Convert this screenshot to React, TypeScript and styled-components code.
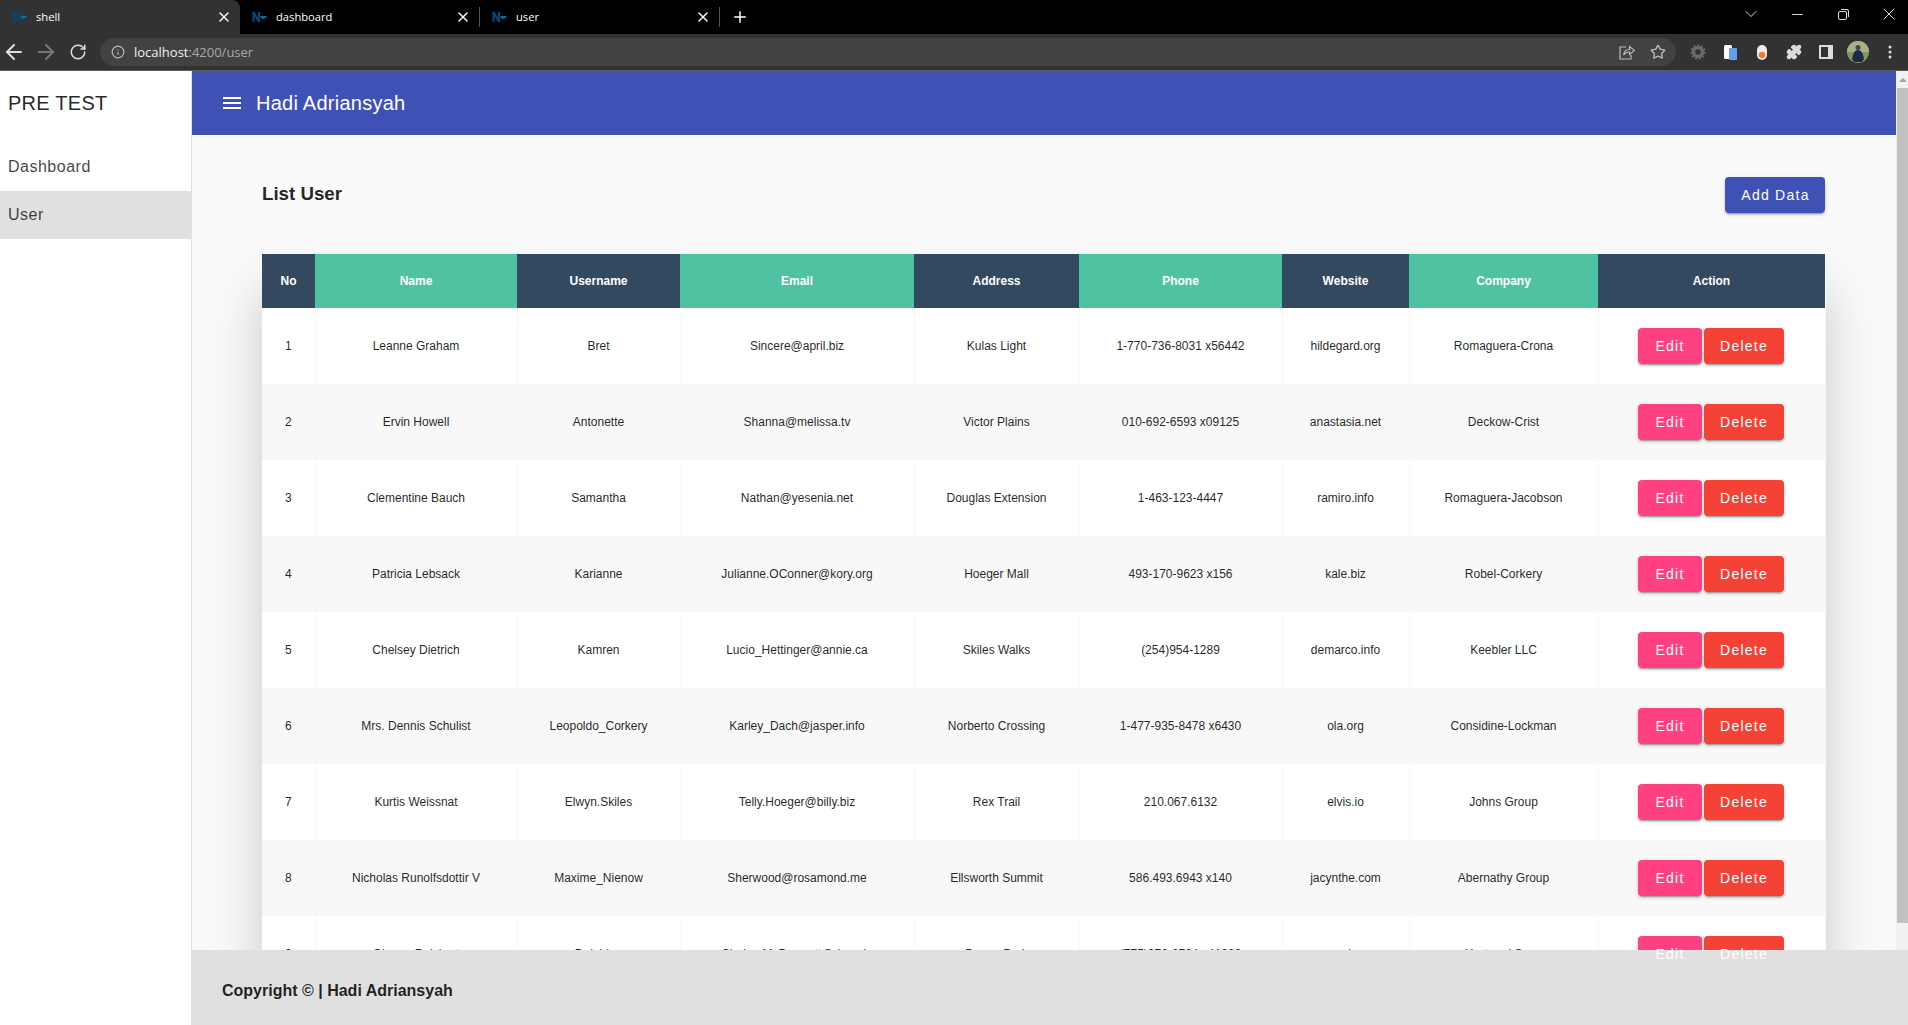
import React from 'react';
import styled, { createGlobalStyle } from 'styled-components';
import { ArrowLeft, ArrowRight, RotateCw, Info, Star, Plus, X, ChevronDown, Minus, Puzzle } from 'lucide-react';

const GlobalStyle = createGlobalStyle`
  html, body {
    margin: 0;
    height: 100%;
    overflow: hidden;
  }
  body {
    font-family: 'Liberation Sans', Arial, sans-serif;
    background: #fafafa;
  }
  * { box-sizing: border-box; }
`;

const Page = styled.div`
  height: 100vh;
  display: flex;
  flex-direction: column;
`;

/* browser chrome */
const TabStrip = styled.div`
  height: 34px;
  background: #000;
  display: flex;
  align-items: flex-start;
  color: #fff;
`;

const Tab = styled.div<{ $active?: boolean }>`
  width: ${(p) => (p.$active ? 240 : 239)}px;
  height: 34px;
  padding: 0 8px 1px 12px;
  display: flex;
  align-items: center;
  gap: 8px;
  font: 11.2px 'Open Sans', sans-serif;
  border-radius: 0 8px 0 0;
  background: ${(p) => (p.$active ? '#323232' : 'transparent')};
  svg.close { margin-left: auto; }
`;

const TabDivider = styled.span`
  width: 1px;
  height: 20px;
  margin-top: 7px;
  background: #555;
`;

const NewTab = styled.div`
  width: 40px;
  height: 34px;
  display: flex;
  align-items: center;
  justify-content: center;
`;

const WindowControls = styled.div`
  margin-left: auto;
  margin-right: -4px;
  height: 28px;
  display: flex;
  align-items: center;
  color: #ddd;
`;

const WindowButton = styled.div`
  width: 46px;
  display: flex;
  justify-content: center;
`;

const AddressBar = styled.div`
  height: 37px;
  background: #323232;
  display: flex;
  align-items: center;
  color: #ddd;
  border-bottom: 1px solid #5a5a5a;
`;

const NavIcons = styled.div`
  width: 100px;
  padding-left: 2px;
  display: flex;
  gap: 8px;
  align-items: center;
`;

const NavSlot = styled.div<{ $dim?: boolean }>`
  width: 24px;
  display: flex;
  justify-content: center;
  color: ${(p) => (p.$dim ? '#777' : '#ddd')};
`;

const Omnibox = styled.div`
  width: 1576px;
  height: 28px;
  background: #424242;
  border-radius: 14px;
  display: flex;
  align-items: center;
  padding: 0 10px 0 11px;
  gap: 9px;
  font: 13px 'Open Sans', sans-serif;
  color: #a9a9a9;
  b { font-weight: 400; color: #f0f0f0; }
`;

const OmniRight = styled.div`
  margin-left: auto;
  display: flex;
  gap: 15px;
  align-items: center;
  color: #bbb;
`;

const ExtIcons = styled.div`
  display: flex;
  align-items: center;
  margin-left: 6px;
`;

const ExtSlot = styled.div`
  width: 32px;
  display: flex;
  justify-content: center;
`;

/* app */
const Viewport = styled.div`
  flex: 1;
  min-height: 0;
  display: flex;
`;

const Sidenav = styled.nav`
  width: 192px;
  flex-shrink: 0;
  background: #fff;
  border-right: 1px solid #e0e0e0;
`;

const Brand = styled.div`
  height: 64px;
  padding: 0 8px;
  display: flex;
  align-items: center;
  font-size: 20px;
  letter-spacing: 0.25px;
  color: rgba(0, 0, 0, 0.87);
`;

const NavList = styled.div`
  padding-top: 8px;
`;

const NavItem = styled.div<{ $active?: boolean }>`
  height: 48px;
  padding: 0 8px;
  display: flex;
  align-items: center;
  font-size: 16px;
  letter-spacing: 0.5px;
  color: rgba(0, 0, 0, 0.75);
  background: ${(p) => (p.$active ? '#e0e0e0' : 'transparent')};
`;

const MainColumn = styled.div`
  flex: 1;
  min-width: 0;
  position: relative;
  display: flex;
  overflow: hidden;
`;

const Inner = styled.div`
  flex: 1;
  min-width: 0;
  display: flex;
  flex-direction: column;
`;

const Toolbar = styled.header`
  height: 64px;
  background: #3f51b5;
  color: #fff;
  display: flex;
  align-items: center;
  padding: 0 31px;
  gap: 15px;
  font-size: 20px;
  letter-spacing: 0.25px;
  flex-shrink: 0;
`;

const Content = styled.main`
  padding: 42px 71px 0 70px;
`;

const TitleRow = styled.div`
  display: flex;
  align-items: center;
  justify-content: space-between;
  margin-bottom: 41px;
`;

const Title = styled.h3`
  margin: 0;
  padding-bottom: 2px;
  font-size: 18.72px;
  font-weight: 700;
  color: rgba(0, 0, 0, 0.87);
`;

const RaisedButton = styled.button<{ $color: string; $width: number }>`
  width: ${(p) => p.$width}px;
  height: 36px;
  border: none;
  border-radius: 4px;
  padding: 0 0 0 1px;
  background: ${(p) => p.$color};
  color: #fff;
  font-family: 'Liberation Sans', Arial, sans-serif;
  font-size: 14px;
  letter-spacing: 1.25px;
  box-shadow: 0 3px 1px -2px rgba(0, 0, 0, 0.2), 0 2px 2px 0 rgba(0, 0, 0, 0.14), 0 1px 5px 0 rgba(0, 0, 0, 0.12);
`;

/* the label sits above the footer, the button background does not */
const ButtonLabel = styled.span`
  position: relative;
  z-index: 3;
`;

const Table = styled.table`
  width: 1563px;
  table-layout: fixed;
  border-collapse: collapse;
  background: #fff;
  font-size: 12px;
  white-space: nowrap;
  box-shadow: 0 35px 50px rgba(0, 0, 0, 0.2);
`;

const Th = styled.th<{ $width: number; $odd: boolean }>`
  width: ${(p) => p.$width}px;
  height: 54px;
  padding: 8px;
  text-align: center;
  color: #fff;
  background: ${(p) => (p.$odd ? '#324960' : '#4fc3a1')};
`;

const Tr = styled.tr`
  height: 76px;
  &:nth-child(even) { background: #f8f8f8; }
`;

const Td = styled.td`
  padding: 8px;
  text-align: center;
  color: rgba(0, 0, 0, 0.87);
  border-right: 1px solid #f8f8f8;
`;

const Actions = styled.div`
  display: flex;
  justify-content: center;
  gap: 2px;
  padding-right: 2px;
`;

const Footer = styled.footer`
  position: absolute;
  left: 0;
  right: 0;
  bottom: 0;
  height: 75px;
  z-index: 2;
  background: #e0e0e0;
  padding: 6px 30px 0;
  display: flex;
  align-items: center;
  font-size: 16px;
  font-weight: 700;
  color: rgba(0, 0, 0, 0.87);
`;

const Scrollbar = styled.div`
  width: 12px;
  flex-shrink: 0;
  background: #f1f1f1;
  display: flex;
  flex-direction: column;
  padding-left: 1px;
`;

const ScrollArrow = styled.div`
  height: 17px;
  display: flex;
  align-items: center;
  justify-content: center;
  &::before {
    content: '';
    border-left: 4px solid transparent;
    border-right: 4px solid transparent;
    border-bottom: 4px solid #a3a3a3;
  }
`;

const ScrollThumb = styled.div`
  height: 835px;
  background: #c1c1c1;
`;

const columns = [
  { label: 'No', width: 53 },
  { label: 'Name', width: 202 },
  { label: 'Username', width: 163 },
  { label: 'Email', width: 234 },
  { label: 'Address', width: 165 },
  { label: 'Phone', width: 203 },
  { label: 'Website', width: 127 },
  { label: 'Company', width: 189 },
  { label: 'Action', width: 227 },
];

const users = [
  ['Leanne Graham', 'Bret', 'Sincere@april.biz', 'Kulas Light', '1-770-736-8031 x56442', 'hildegard.org', 'Romaguera-Crona'],
  ['Ervin Howell', 'Antonette', 'Shanna@melissa.tv', 'Victor Plains', '010-692-6593 x09125', 'anastasia.net', 'Deckow-Crist'],
  ['Clementine Bauch', 'Samantha', 'Nathan@yesenia.net', 'Douglas Extension', '1-463-123-4447', 'ramiro.info', 'Romaguera-Jacobson'],
  ['Patricia Lebsack', 'Karianne', 'Julianne.OConner@kory.org', 'Hoeger Mall', '493-170-9623 x156', 'kale.biz', 'Robel-Corkery'],
  ['Chelsey Dietrich', 'Kamren', 'Lucio_Hettinger@annie.ca', 'Skiles Walks', '(254)954-1289', 'demarco.info', 'Keebler LLC'],
  ['Mrs. Dennis Schulist', 'Leopoldo_Corkery', 'Karley_Dach@jasper.info', 'Norberto Crossing', '1-477-935-8478 x6430', 'ola.org', 'Considine-Lockman'],
  ['Kurtis Weissnat', 'Elwyn.Skiles', 'Telly.Hoeger@billy.biz', 'Rex Trail', '210.067.6132', 'elvis.io', 'Johns Group'],
  ['Nicholas Runolfsdottir V', 'Maxime_Nienow', 'Sherwood@rosamond.me', 'Ellsworth Summit', '586.493.6943 x140', 'jacynthe.com', 'Abernathy Group'],
  ['Glenna Reichert', 'Delphine', 'Chaim_McDermott@dana.io', 'Dayna Park', '(775)976-6794 x41206', 'conrad.com', 'Yost and Sons'],
];

const NxIcon = () => (
  <svg width="16" height="16" viewBox="0 0 16 16">
    <path d="M1.500 13V3l5.500 10V3" fill="none" stroke="#0a4470" strokeWidth="2.200" />
    <path d="M8 7h7.500l-3 2.500-2.500.5z" fill="#0f6aa0" />
  </svg>
);

const MenuIcon = () => (
  <svg width="18" height="12" viewBox="0 0 18 12" fill="#fff">
    <rect width="18" height="2" />
    <rect y="5" width="18" height="2" />
    <rect y="10" width="18" height="2" />
  </svg>
);

const ShareIcon = () => (
  <svg width="16" height="16" viewBox="0 0 16 16" fill="none" stroke="#bbb" strokeWidth="1.2">
    <path d="M7 3H1v12h11v-4" />
    <path d="M4.500 11c.5-3.500 2.500-5.500 6-5.500V2.500L15.500 6.500l-5 4V8C8 8 6 9 4.500 11z" />
  </svg>
);

const RestoreIcon = () => (
  <svg width="11" height="11" viewBox="0 0 11 11" fill="none" stroke="#ddd">
    <rect x="0.500" y="2.500" width="8" height="8" rx="1.500" />
    <path d="M3 .5h6a1.500 1.500 0 0 1 1.500 1.500v6" />
  </svg>
);

const GearIcon = () => (
  <svg width="16" height="16" viewBox="0 0 16 16">
    <circle cx="8" cy="8" r="4.500" fill="none" stroke="#6a6a6a" strokeWidth="3.500" />
    <circle cx="8" cy="8" r="7" fill="none" stroke="#6a6a6a" strokeWidth="1.500" strokeDasharray="2 2" />
  </svg>
);

const PagesIcon = () => (
  <svg width="13" height="15" viewBox="0 0 13 15">
    <rect x="0" y="0" width="8" height="14" rx="1.500" fill="#fff" />
    <rect x="5" y="3" width="8" height="12" rx="1" fill="#5ea1f2" />
  </svg>
);

const DotIcon = () => (
  <svg width="10" height="15" viewBox="0 0 10 15">
    <rect x="0" y="0" width="10" height="15" rx="5" fill="#eee" />
    <circle cx="5" cy="10" r="3.200" fill="#f57c2a" />
  </svg>
);

const SidePanelIcon = () => (
  <svg width="14" height="14" viewBox="0 0 14 14">
    <rect width="14" height="14" fill="#ddd" />
    <rect x="2" y="2" width="7" height="10" fill="#323232" />
  </svg>
);

const AvatarIcon = () => (
  <svg width="22" height="22" viewBox="0 0 22 22">
    <circle cx="11" cy="11" r="11" fill="#7f9a58" />
    <path d="M0 11a11 11 0 0 1 22 0z" fill="#a3b48a" />
    <circle cx="11" cy="6.500" r="2.500" fill="#4a4046" />
    <path d="M5 18c1-6 3-9 6-9s5 3 6 9l-2 3H7z" fill="#1d2a4c" />
  </svg>
);

const KebabIcon = () => (
  <svg width="4" height="14" viewBox="0 0 4 14" fill="#ddd">
    <circle cx="2" cy="2" r="1.500" />
    <circle cx="2" cy="7" r="1.500" />
    <circle cx="2" cy="12" r="1.500" />
  </svg>
);

const tabs = ['shell', 'dashboard', 'user'];

export default function App() {
  return (
    <Page>
      <GlobalStyle />
      <TabStrip>
        {tabs.map((t, i) => (
          <React.Fragment key={t}>
            <Tab $active={i === 0}>
              <NxIcon />
              {t}
              <X className="close" size={16} />
            </Tab>
            {i > 0 && <TabDivider />}
          </React.Fragment>
        ))}
        <NewTab><Plus size={18} /></NewTab>
        <WindowControls>
          <WindowButton><ChevronDown size={20} strokeWidth={1.2} /></WindowButton>
          <WindowButton><Minus size={17} strokeWidth={1.4} /></WindowButton>
          <WindowButton><RestoreIcon /></WindowButton>
          <WindowButton><X size={20} strokeWidth={1.2} /></WindowButton>
        </WindowControls>
      </TabStrip>
      <AddressBar>
        <NavIcons>
          <NavSlot><ArrowLeft size={24} /></NavSlot>
          <NavSlot $dim><ArrowRight size={24} /></NavSlot>
          <NavSlot><RotateCw size={18} /></NavSlot>
        </NavIcons>
        <Omnibox>
          <Info size={14} color="#bbb" />
          <span><b>localhost</b>:4200/user</span>
          <OmniRight>
            <ShareIcon />
            <Star size={16} />
          </OmniRight>
        </Omnibox>
        <ExtIcons>
          <ExtSlot><GearIcon /></ExtSlot>
          <ExtSlot><PagesIcon /></ExtSlot>
          <ExtSlot><DotIcon /></ExtSlot>
          <ExtSlot><Puzzle size={16} fill="#ddd" /></ExtSlot>
          <ExtSlot><SidePanelIcon /></ExtSlot>
          <ExtSlot><AvatarIcon /></ExtSlot>
          <ExtSlot><KebabIcon /></ExtSlot>
        </ExtIcons>
      </AddressBar>
      <Viewport>
        <Sidenav>
          <Brand>PRE TEST</Brand>
          <NavList>
            <NavItem>Dashboard</NavItem>
            <NavItem $active>User</NavItem>
          </NavList>
        </Sidenav>
        <MainColumn>
          <Inner>
            <Toolbar>
              <MenuIcon />
              Hadi Adriansyah
            </Toolbar>
            <Content>
              <TitleRow>
                <Title>List User</Title>
                <RaisedButton $color="#3f51b5" $width={100}>Add Data</RaisedButton>
              </TitleRow>
              <Table>
                <thead>
                  <tr>
                    {columns.map((c, i) => (
                      <Th key={c.label} $width={c.width} $odd={i % 2 === 0}>{c.label}</Th>
                    ))}
                  </tr>
                </thead>
                <tbody>
                  {users.map((u, i) => (
                    <Tr key={u[0]}>
                      <Td>{i + 1}</Td>
                      {u.map((v) => <Td key={v}>{v}</Td>)}
                      <Td>
                        <Actions>
                          <RaisedButton $color="#ff4081" $width={64}><ButtonLabel>Edit</ButtonLabel></RaisedButton>
                          <RaisedButton $color="#f44336" $width={80}><ButtonLabel>Delete</ButtonLabel></RaisedButton>
                        </Actions>
                      </Td>
                    </Tr>
                  ))}
                </tbody>
              </Table>
            </Content>
          </Inner>
          <Scrollbar>
            <ScrollArrow />
            <ScrollThumb />
          </Scrollbar>
          <Footer>Copyright © | Hadi Adriansyah</Footer>
        </MainColumn>
      </Viewport>
    </Page>
  );
}
